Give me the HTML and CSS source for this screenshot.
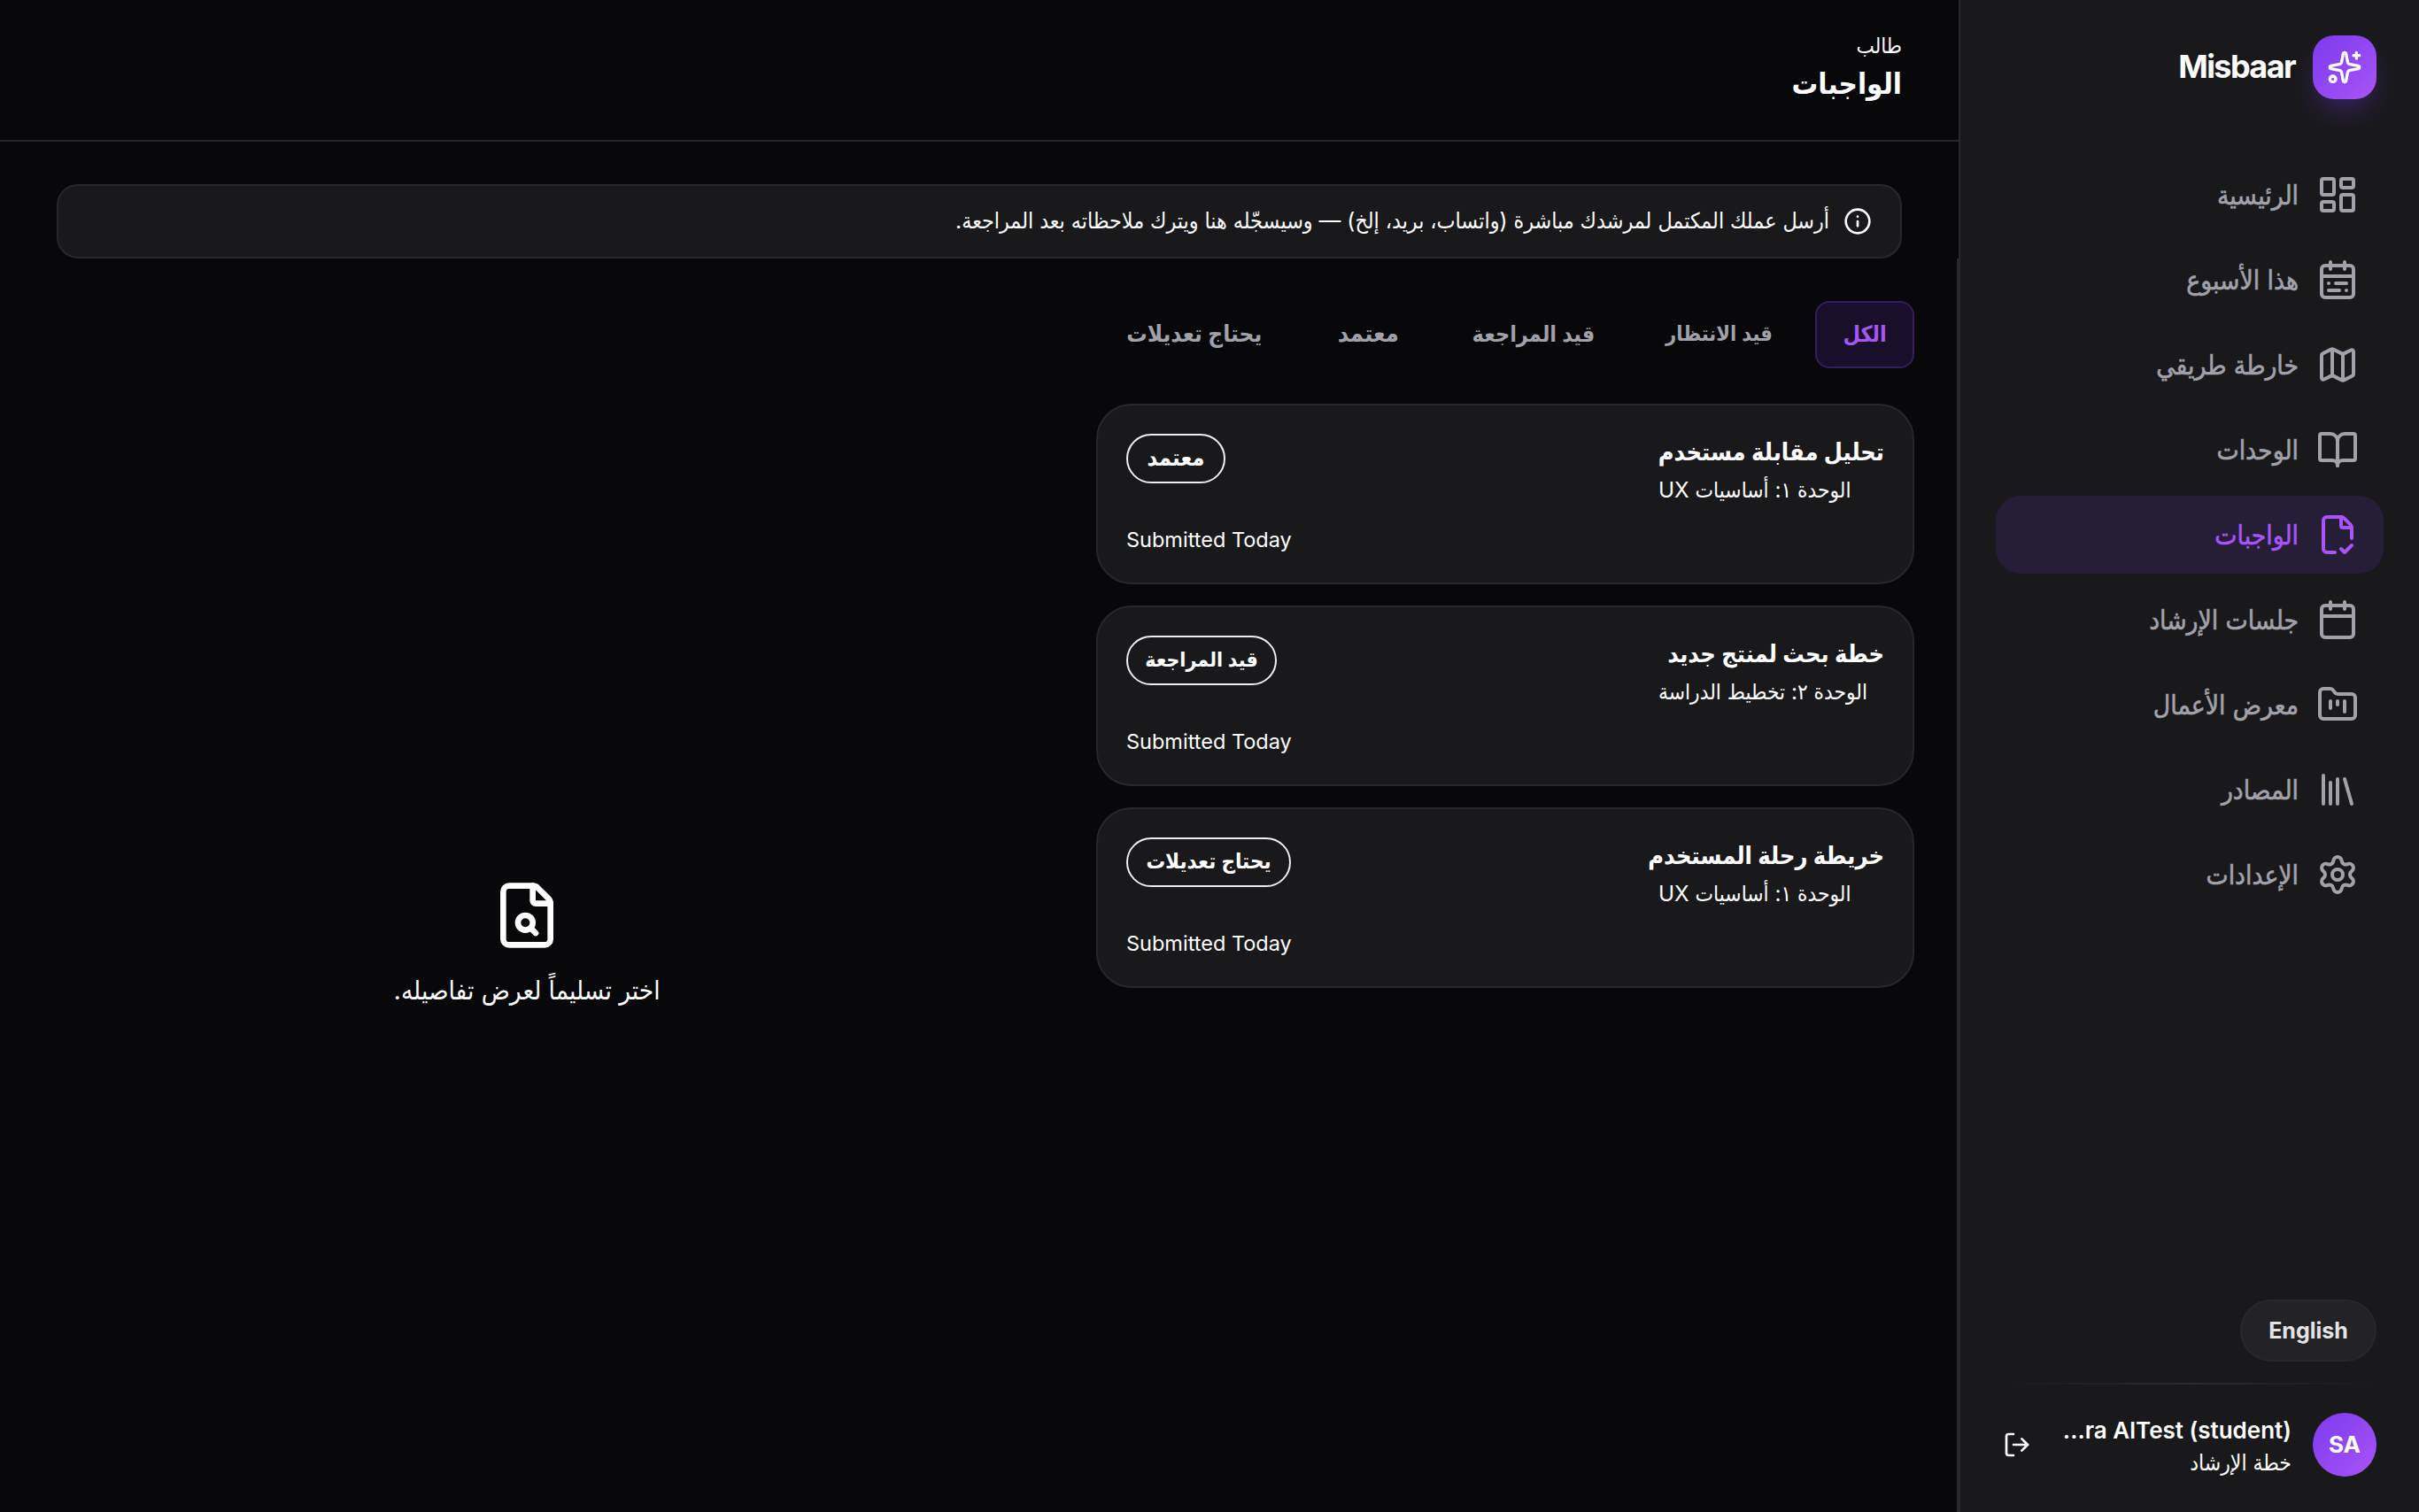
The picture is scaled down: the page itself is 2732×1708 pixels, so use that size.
FILE: index.html
```html
<!DOCTYPE html>
<html lang="ar" dir="rtl">
<head>
  <meta charset="UTF-8">
  <meta name="viewport" content="width=device-width, initial-scale=1.0">
  <title>الواجبات - Misbaar</title>
  <link rel="stylesheet" href="styles.css">
</head>
<body>
  <div class="app">
    <aside class="sidebar">
      <div class="brand">
        <div class="brand-logo">
          <svg class="icon" viewBox="0 0 24 24"><path d="M11.017 2.814a1 1 0 0 1 1.966 0l1.051 5.558a2 2 0 0 0 1.594 1.594l5.558 1.051a1 1 0 0 1 0 1.966l-5.558 1.051a2 2 0 0 0-1.594 1.594l-1.051 5.558a1 1 0 0 1-1.966 0l-1.051-5.558a2 2 0 0 0-1.594-1.594l-5.558-1.051a1 1 0 0 1 0-1.966l5.558-1.051a2 2 0 0 0 1.594-1.594z"/><path d="M20 2v4"/><path d="M22 4h-4"/><circle cx="4" cy="20" r="2"/></svg>
        </div>
        <span class="brand-name">Misbaar</span>
      </div>

      <nav class="nav">
        <a class="nav-item">
          <svg class="icon" viewBox="0 0 24 24"><rect width="7" height="9" x="3" y="3" rx="1"/><rect width="7" height="5" x="14" y="3" rx="1"/><rect width="7" height="9" x="14" y="12" rx="1"/><rect width="7" height="5" x="3" y="16" rx="1"/></svg>
          <span>الرئيسية</span>
        </a>
        <a class="nav-item">
          <svg class="icon" viewBox="0 0 24 24"><rect width="18" height="18" x="3" y="4" rx="2"/><path d="M16 2v4"/><path d="M3 10h18"/><path d="M8 2v4"/><path d="M17 14h-6"/><path d="M13 18H7"/><path d="M7 14h.01"/><path d="M17 18h.01"/></svg>
          <span>هذا الأسبوع</span>
        </a>
        <a class="nav-item">
          <svg class="icon" viewBox="0 0 24 24"><path d="M14.106 5.553a2 2 0 0 0 1.788 0l3.659-1.83A1 1 0 0 1 21 4.619v12.764a1 1 0 0 1-.553.894l-4.553 2.277a2 2 0 0 1-1.788 0l-4.212-2.106a2 2 0 0 0-1.788 0l-3.659 1.83A1 1 0 0 1 3 19.381V6.618a1 1 0 0 1 .553-.894l4.553-2.277a2 2 0 0 1 1.788 0z"/><path d="M15 5.764v15"/><path d="M9 3.236v15"/></svg>
          <span>خارطة طريقي</span>
        </a>
        <a class="nav-item">
          <svg class="icon" viewBox="0 0 24 24"><path d="M12 7v14"/><path d="M3 18a1 1 0 0 1-1-1V4a1 1 0 0 1 1-1h5a4 4 0 0 1 4 4 4 4 0 0 1 4-4h5a1 1 0 0 1 1 1v13a1 1 0 0 1-1 1h-6a3 3 0 0 0-3 3 3 3 0 0 0-3-3z"/></svg>
          <span>الوحدات</span>
        </a>
        <a class="nav-item active">
          <svg class="icon" viewBox="0 0 24 24"><path d="M10.5 22H6a2 2 0 0 1-2-2V4a2 2 0 0 1 2-2h8a2.4 2.4 0 0 1 1.706.706l3.588 3.588A2.4 2.4 0 0 1 20 8v6"/><path d="M14 2v5a1 1 0 0 0 1 1h5"/><path d="m14 20 2 2 4-4"/></svg>
          <span>الواجبات</span>
        </a>
        <a class="nav-item">
          <svg class="icon" viewBox="0 0 24 24"><path d="M8 2v4"/><path d="M16 2v4"/><rect width="18" height="18" x="3" y="4" rx="2"/><path d="M3 10h18"/></svg>
          <span>جلسات الإرشاد</span>
        </a>
        <a class="nav-item">
          <svg class="icon" viewBox="0 0 24 24"><path d="M4 20h16a2 2 0 0 0 2-2V8a2 2 0 0 0-2-2h-7.93a2 2 0 0 1-1.66-.9l-.82-1.2A2 2 0 0 0 7.93 3H4a2 2 0 0 0-2 2v13c0 1.1.9 2 2 2Z"/><path d="M8 10v4"/><path d="M12 10v2"/><path d="M16 10v6"/></svg>
          <span>معرض الأعمال</span>
        </a>
        <a class="nav-item">
          <svg class="icon" viewBox="0 0 24 24"><path d="m16 6 4 14"/><path d="M12 6v14"/><path d="M8 8v12"/><path d="M4 4v16"/></svg>
          <span>المصادر</span>
        </a>
        <a class="nav-item">
          <svg class="icon" viewBox="0 0 24 24"><path d="M9.671 4.136a2.34 2.34 0 0 1 4.659 0 2.34 2.34 0 0 0 3.319 1.915 2.34 2.34 0 0 1 2.33 4.033 2.34 2.34 0 0 0 0 3.831 2.34 2.34 0 0 1-2.33 4.033 2.34 2.34 0 0 0-3.319 1.915 2.34 2.34 0 0 1-4.659 0 2.34 2.34 0 0 0-3.32-1.915 2.34 2.34 0 0 1-2.33-4.033 2.34 2.34 0 0 0 0-3.831A2.34 2.34 0 0 1 6.35 6.051a2.34 2.34 0 0 0 3.319-1.915"/><circle cx="12" cy="12" r="3"/></svg>
          <span>الإعدادات</span>
        </a>
      </nav>

      <div class="sidebar-footer">
        <button class="lang-btn">English</button>
        <div class="divider"></div>
        <div class="user">
          <div class="avatar">SA</div>
          <div class="user-info">
            <div class="user-name" dir="ltr">...ra AlTest (student)</div>
            <div class="user-plan">خطة الإرشاد</div>
          </div>
          <svg class="icon logout" viewBox="0 0 24 24"><path d="m16 17 5-5-5-5"/><path d="M21 12H9"/><path d="M9 21H5a2 2 0 0 1-2-2V5a2 2 0 0 1 2-2h4"/></svg>
        </div>
      </div>
    </aside>

    <main class="main">
      <header class="page-header">
        <div class="role">طالب</div>
        <h1>الواجبات</h1>
      </header>

      <div class="notice">
        <svg class="icon" viewBox="0 0 24 24"><circle cx="12" cy="12" r="10"/><path d="M12 16v-4"/><path d="M12 8h.01"/></svg>
        <p>أرسل عملك المكتمل لمرشدك مباشرة (واتساب، بريد، إلخ) — وسيسجّله هنا ويترك ملاحظاته بعد المراجعة.</p>
      </div>

      <div class="content">
        <section class="list">
          <div class="tabs">
            <button class="tab tab-all active">الكل</button>
            <button class="tab tab-pending">قيد الانتظار</button>
            <button class="tab tab-review">قيد المراجعة</button>
            <button class="tab tab-approved">معتمد</button>
            <button class="tab tab-changes">يحتاج تعديلات</button>
          </div>

          <article class="card">
            <div class="card-top">
              <div class="card-text">
                <h3>تحليل مقابلة مستخدم</h3>
                <p>الوحدة ١: أساسيات UX</p>
              </div>
              <span class="badge badge-approved">معتمد</span>
            </div>
            <div class="card-date">Submitted Today</div>
          </article>

          <article class="card">
            <div class="card-top">
              <div class="card-text">
                <h3>خطة بحث لمنتج جديد</h3>
                <p>الوحدة ٢: تخطيط الدراسة</p>
              </div>
              <span class="badge badge-review">قيد المراجعة</span>
            </div>
            <div class="card-date">Submitted Today</div>
          </article>

          <article class="card">
            <div class="card-top">
              <div class="card-text">
                <h3>خريطة رحلة المستخدم</h3>
                <p>الوحدة ١: أساسيات UX</p>
              </div>
              <span class="badge badge-changes">يحتاج تعديلات</span>
            </div>
            <div class="card-date">Submitted Today</div>
          </article>
        </section>

        <section class="empty">
          <svg class="icon" viewBox="0 0 24 24"><path d="M6 22a2 2 0 0 1-2-2V4a2 2 0 0 1 2-2h8a2.4 2.4 0 0 1 1.704.706l3.588 3.588A2.4 2.4 0 0 1 20 8v12a2 2 0 0 1-2 2z"/><path d="M14 2v5a1 1 0 0 0 1 1h5"/><circle cx="11.5" cy="14.5" r="2.5"/><path d="M13.3 16.3 15 18"/></svg>
          <p>اختر تسليماً لعرض تفاصيله.</p>
        </section>
      </div>
    </main>
  </div>
</body>
</html>
```
FILE: styles.css
```css
* {
  box-sizing: border-box;
  margin: 0;
  padding: 0;
}
body {
  font-family: Inter, "DejaVu Sans Condensed", "DejaVu Sans", sans-serif;
  font-stretch: condensed;
  background-color: #08080a;
  color: #fff;
  white-space: nowrap;
}
button {
  font: inherit;
  color: inherit;
  border: none;
  background: none;
}
.icon {
  flex-shrink: 0;
  fill: none;
  stroke: currentColor;
  stroke-width: 2;
  stroke-linecap: round;
  stroke-linejoin: round;
}
.app {
  display: flex;
  height: 1708px;
  overflow: hidden;
}

/* sidebar */
.sidebar {
  width: 520px;
  flex-shrink: 0;
  display: flex;
  flex-direction: column;
  background: #19191b;
  border-left: 2px solid #28282a;
  padding: 40px 0;
}
.brand {
  display: flex;
  align-items: center;
  gap: 20px;
  height: 72px;
  padding: 0 48px;
}
.brand-logo {
  width: 72px;
  height: 72px;
  border-radius: 24px;
  display: flex;
  align-items: center;
  justify-content: center;
  background: linear-gradient(135deg, #7c3aed, #a855f7);
  box-shadow: 0 16px 32px -8px rgba(124, 58, 237, 0.4);
}
.brand-logo .icon {
  width: 40px;
  height: 40px;
}
.brand-name {
  font-size: 36px;
  font-weight: 700;
  letter-spacing: -1.6px;
  padding-bottom: 2px;
}
.nav {
  display: flex;
  flex-direction: column;
  gap: 8px;
  padding: 0 40px;
  margin-top: 64px;
}
.nav-item {
  display: flex;
  align-items: center;
  gap: 20px;
  height: 88px;
  padding: 0 28px;
  border-radius: 28px;
  font-size: 29.7px;
  color: #a1a1aa;
  -webkit-text-stroke: 0.6px currentColor;
}
.nav-item .icon {
  width: 48px;
  height: 48px;
}
.nav-item.active {
  background: #261d37;
  color: #a855f7;
}
.sidebar-footer {
  margin-top: auto;
  padding: 0 48px;
}
.lang-btn {
  display: block;
  width: 154px;
  height: 70px;
  border-radius: 35px;
  border: 2px solid #28282a;
  background: #232325;
  color: #e4e4e7;
  font-size: 25px;
  font-weight: 700;
}
.divider {
  height: 2px;
  margin: 24px 0 32px;
  background: linear-gradient(90deg, transparent, #2c2c2e, transparent);
}
.user {
  display: flex;
  align-items: center;
  height: 72px;
}
.avatar {
  width: 72px;
  height: 72px;
  border-radius: 50%;
  background: linear-gradient(135deg, #7c3aed, #a855f7);
  font-size: 26px;
  font-weight: 700;
  line-height: 72px;
  text-align: center;
}
.user-info {
  flex: 1;
  padding: 2px 24px 0 0;
}
.user-name {
  font-size: 26px;
  font-weight: 600;
  line-height: 38px;
  text-align: right;
}
.user-plan {
  font-size: 24.5px;
  line-height: 34px;
}
.logout {
  width: 32px;
  height: 32px;
}

/* main */
.main {
  flex: 1;
  display: flex;
  flex-direction: column;
}
.page-header {
  height: 160px;
  padding: 34px 64px 0;
  border-bottom: 2px solid #28282a;
}
.role {
  font-size: 24px;
  line-height: 36px;
}
.page-header h1 {
  font-size: 33px;
  line-height: 49px;
}
.notice {
  display: flex;
  align-items: center;
  gap: 16px;
  height: 84px;
  margin: 48px 64px 0;
  padding: 0 32px;
  border: 2px solid #28282a;
  border-radius: 24px;
  background: #19191b;
  font-size: 24.8px;
}
.notice p {
  padding-bottom: 2px;
}
.notice .icon {
  width: 32px;
  height: 32px;
}
.content {
  flex: 1;
  display: flex;
}
.list {
  width: 1022px;
  padding: 48px 48px 0;
  border-right: 2px solid #28282a;
}
.tabs {
  display: flex;
  gap: 12px;
  margin-bottom: 40px;
}
.tab {
  height: 76px;
  padding-bottom: 3px;
  border: 2px solid transparent;
  border-radius: 16px;
  color: #a1a1aa;
  font-size: 25px;
  font-weight: 600;
}
.tab.active {
  background: #190f2a;
  border-color: #361c61;
  color: #a855f7;
}
.tab-all {
  width: 112px;
}
.tab-pending {
  width: 194px;
  font-size: 23.5px;
}
.tab-review {
  width: 202px;
}
.tab-approved {
  width: 148px;
  font-size: 27px;
}
.tab-changes {
  width: 222px;
  font-size: 26px;
}
.card {
  height: 204px;
  padding: 32px;
  margin-bottom: 24px;
  border: 2px solid #28282a;
  border-radius: 40px;
  background: #19191b;
}
.card-top {
  display: flex;
  justify-content: space-between;
  align-items: flex-start;
  height: 100px;
}
.card-text {
  width: 255px;
}
.card h3 {
  font-size: 27px;
  font-weight: 700;
  line-height: 42px;
}
.card p {
  font-size: 24.3px;
  line-height: 42px;
  text-align: left;
}
.badge {
  height: 56px;
  border: 2px solid #eee;
  border-radius: 28px;
  font-size: 24px;
  font-weight: 600;
  line-height: 50px;
  text-align: center;
}
.badge-approved {
  width: 112px;
  font-size: 25.5px;
}
.badge-review {
  width: 170px;
  font-size: 23px;
}
.badge-changes {
  width: 186px;
}
.card-date {
  font-size: 23.5px;
  line-height: 40px;
  text-align: left;
}
.empty {
  flex: 1;
  display: flex;
  flex-direction: column;
  align-items: center;
  justify-content: center;
  gap: 26px;
  padding-top: 130px;
  font-size: 29.5px;
}
.empty .icon {
  width: 80px;
  height: 80px;
}
```
